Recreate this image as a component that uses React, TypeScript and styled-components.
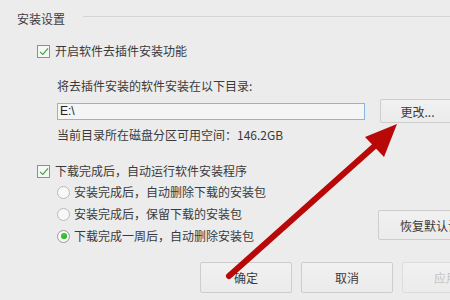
import React from 'react';
import styled, { createGlobalStyle } from 'styled-components';

const GlobalStyle = createGlobalStyle`
  html, body {
    margin: 0;
    padding: 0;
    background: #ececec;
    overflow: hidden;
  }
  body {
    font-family: "Noto Sans CJK SC", "Noto Sans", sans-serif;
    font-size: 12px;
    color: #3a3a3a;
  }
`;

const Page = styled.div`
  position: relative;
  width: 500px;
  height: 300px;
  background: #ececec;
  display: flex;
  flex-direction: column;
  overflow: hidden;
`;

const GroupHeader = styled.div`
  display: flex;
  padding: 11px 0 0 17px;
  height: 16px;
  line-height: 16px;
  font-size: 12px;
  color: #3c3c3c;
`;

const GroupLine = styled.div`
  flex: 1;
  height: 1px;
  margin: 5px 0 0 18px;
  background: #d5d5d5;
`;

const Row = styled.div<{ $top: number; $left: number }>`
  display: flex;
  align-items: center;
  margin-top: ${p => p.$top}px;
  padding-left: ${p => p.$left}px;
  height: 16px;
  line-height: 16px;
  white-space: nowrap;
`;

const Box = styled.span`
  width: 11px;
  height: 11px;
  border: 1px solid #8f8f8f;
  background: #f7f7f7;
  margin-right: 5px;
  display: flex;
  align-items: center;
  justify-content: center;
`;

const Dot = styled.span<{ $on?: boolean }>`
  width: 11px;
  height: 11px;
  border-radius: 50%;
  border: 1px solid ${p => (p.$on ? '#9a9a9a' : '#b9b9b9')};
  background: #f8f8f8;
  margin-right: 4px;
  display: flex;
  align-items: center;
  justify-content: center;
  &::after {
    content: '';
    display: ${p => (p.$on ? 'block' : 'none')};
    width: 6px;
    height: 6px;
    border-radius: 50%;
    background: radial-gradient(circle at 40% 35%, #3fd43a, #15a215);
  }
`;

const PathRow = styled.div`
  display: flex;
  align-items: center;
  margin-top: 5px;
  padding-left: 57px;
  height: 24px;
`;

const PathInput = styled.div`
  width: 304px;
  height: 15px;
  border: 1px solid #86b6e6;
  background: #f5f5f5;
  line-height: 15px;
  padding-left: 2px;
  font-family: "Liberation Sans", "Noto Sans", sans-serif;
  font-size: 12px;
  color: #222;
  margin-right: 15px;
`;

const Button = styled.div<{ $w?: number; $h?: number; $disabled?: boolean }>`
  width: ${p => p.$w ?? 90}px;
  height: ${p => p.$h ?? 28}px;
  flex-shrink: 0;
  box-sizing: border-box;
  border: 1px solid ${p => (p.$disabled ? '#dcdcdc' : '#cdcdcd')};
  border-radius: 2px;
  background: linear-gradient(#f1f1f1, #ebebeb);
  color: ${p => (p.$disabled ? '#c4c4c4' : '#3a3a3a')};
  display: flex;
  align-items: center;
  justify-content: center;
  font-size: 12px;
  white-space: nowrap;
`;

const OptionArea = styled.div`
  display: flex;
  align-items: flex-end;
`;

const RadioGroup = styled.div`
  display: flex;
  flex-direction: column;
  width: 378px;
`;

const ResetSlot = styled.div`
  margin-bottom: 4px;
`;

const Footer = styled.div`
  display: flex;
  gap: 9px;
  margin-top: 18px;
  padding-left: 200px;
`;

const Overlay = styled.svg`
  position: absolute;
  left: 0;
  top: 0;
  pointer-events: none;
`;

const Check = () => (
  <svg width="10" height="9" viewBox="0 0 10 9">
    <path d="M1 4.8 L3.8 7.4 L9 1.4" fill="none" stroke="#3aa33a" strokeWidth="1.1" />
  </svg>
);

export default function App() {
  return (
    <Page>
      <GlobalStyle />
      <GroupHeader>
        安装设置
        <GroupLine />
      </GroupHeader>

      <Row $top={16} $left={37}>
        <Box><Check /></Box>
        开启软件去插件安装功能
      </Row>
      <Row $top={19} $left={57}>将去插件安装的软件安装在以下目录:</Row>
      <PathRow>
        <PathInput>E:\</PathInput>
        <Button $w={75} $h={24}>更改...</Button>
      </PathRow>
      <Row $top={4} $left={57}>当前目录所在磁盘分区可用空间：146.2GB</Row>
      <Row $top={20} $left={37}>
        <Box><Check /></Box>
        下载完成后，自动运行软件安装程序
      </Row>

      <OptionArea>
        <RadioGroup>
          <Row $top={5} $left={57}>
            <Dot />
            安装完成后，自动删除下载的安装包
          </Row>
          <Row $top={6} $left={57}>
            <Dot />
            安装完成后，保留下载的安装包
          </Row>
          <Row $top={6} $left={57}>
            <Dot $on />
            下载完成一周后，自动删除安装包
          </Row>
        </RadioGroup>
        <ResetSlot>
          <Button $w={116} $h={30}>恢复默认设置</Button>
        </ResetSlot>
      </OptionArea>

      <Footer>
        <Button $w={92} $h={31}>确定</Button>
        <Button $w={92} $h={31}>取消</Button>
        <Button $w={88} $h={31} $disabled>应用</Button>
      </Footer>

      <Overlay width="450" height="300" viewBox="0 0 450 300">
        <line x1="229" y1="276" x2="378" y2="143" stroke="#b80808" strokeWidth="6" strokeLinecap="round" />
        <polygon points="397,124 365,137 384,157" fill="#b80808" />
      </Overlay>
    </Page>
  );
}
